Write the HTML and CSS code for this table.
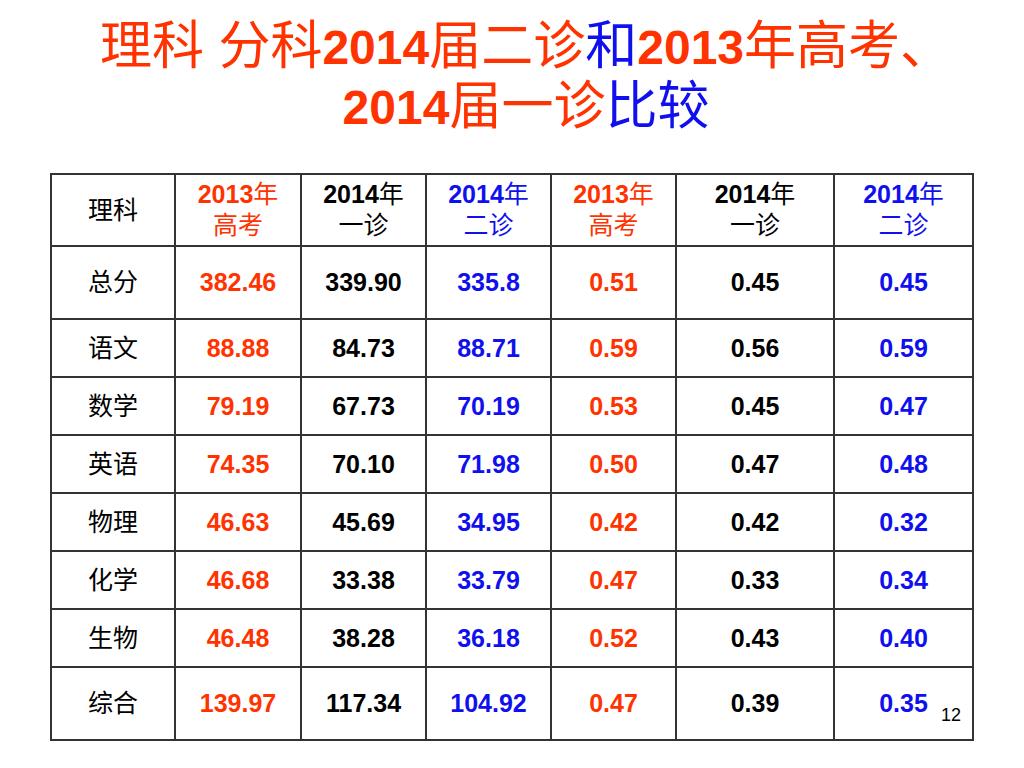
FILE: index.html
```html
<!DOCTYPE html>
<html lang="zh-CN">
<head>
<meta charset="utf-8">
<title>理科 分科比较</title>
<link rel="stylesheet" href="styles.css">
</head>
<body>
<div class="slide">
  <h1 class="title">
    <span class="line">理科 分科<b>2014</b>届二诊<span class="blue">和</span><b>2013</b>年高考、</span>
    <span class="line"><b>2014</b>届一诊<span class="blue">比较</span></span>
  </h1>
  <table class="grid">
    <colgroup>
      <col class="c1"><col class="c2"><col class="c3"><col class="c4"><col class="c5"><col class="c6"><col class="c7">
    </colgroup>
    <tr class="head">
      <td class="k">理科</td>
      <td class="r"><b>2013</b>年<br>高考</td>
      <td class="n"><b>2014</b>年<br>一诊</td>
      <td class="b"><b>2014</b>年<br>二诊</td>
      <td class="r"><b>2013</b>年<br>高考</td>
      <td class="n"><b>2014</b>年<br>一诊</td>
      <td class="b"><b>2014</b>年<br>二诊</td>
    </tr>
    <tr class="tall">
      <td class="k">总分</td><td class="r v">382.46</td><td class="n v">339.90</td><td class="b v">335.8</td><td class="r v">0.51</td><td class="n v">0.45</td><td class="b v">0.45</td>
    </tr>
    <tr class="row">
      <td class="k">语文</td><td class="r v">88.88</td><td class="n v">84.73</td><td class="b v">88.71</td><td class="r v">0.59</td><td class="n v">0.56</td><td class="b v">0.59</td>
    </tr>
    <tr class="row">
      <td class="k">数学</td><td class="r v">79.19</td><td class="n v">67.73</td><td class="b v">70.19</td><td class="r v">0.53</td><td class="n v">0.45</td><td class="b v">0.47</td>
    </tr>
    <tr class="row">
      <td class="k">英语</td><td class="r v">74.35</td><td class="n v">70.10</td><td class="b v">71.98</td><td class="r v">0.50</td><td class="n v">0.47</td><td class="b v">0.48</td>
    </tr>
    <tr class="row">
      <td class="k">物理</td><td class="r v">46.63</td><td class="n v">45.69</td><td class="b v">34.95</td><td class="r v">0.42</td><td class="n v">0.42</td><td class="b v">0.32</td>
    </tr>
    <tr class="row">
      <td class="k">化学</td><td class="r v">46.68</td><td class="n v">33.38</td><td class="b v">33.79</td><td class="r v">0.47</td><td class="n v">0.33</td><td class="b v">0.34</td>
    </tr>
    <tr class="row">
      <td class="k">生物</td><td class="r v">46.48</td><td class="n v">38.28</td><td class="b v">36.18</td><td class="r v">0.52</td><td class="n v">0.43</td><td class="b v">0.40</td>
    </tr>
    <tr class="tall">
      <td class="k">综合</td><td class="r v">139.97</td><td class="n v">117.34</td><td class="b v">104.92</td><td class="r v">0.47</td><td class="n v">0.39</td><td class="b v">0.35</td>
    </tr>
  </table>
  <div class="pageno">12</div>
</div>
</body>
</html>
```

FILE: styles.css
```css
html, body {
  margin: 0;
  padding: 0;
  background: #ffffff;
}

.slide {
  position: relative;
  width: 1024px;
  height: 768px;
  font-family: "Liberation Sans", "Noto Sans CJK SC", sans-serif;
}

.title {
  margin: 0;
  padding: 16px 0 0 28px;
  height: 173px;
  box-sizing: border-box;
  display: flex;
  flex-direction: column;
  align-items: center;
  font-family: "Liberation Sans", "Noto Sans CJK SC", sans-serif;
  font-weight: normal;
  font-size: 52px;
  line-height: 60px;
  color: #ff3300;
}

.title .line {
  display: block;
  white-space: nowrap;
  height: 60px;
}

.title b {
  font-weight: bold;
  font-size: 48px;
}

.blue {
  color: #1010ee;
}

.grid {
  margin-left: 50px;
  border-collapse: collapse;
  table-layout: fixed;
  width: 923px;
}

.grid td {
  border: 2px solid #333333;
  padding: 0;
  text-align: center;
  vertical-align: middle;
  font-size: 25px;
  line-height: 31px;
  font-weight: normal;
}

.grid td b {
  font-weight: bold;
}

.grid td.v {
  font-weight: bold;
  font-size: 25px;
}

.c1 { width: 124px; }
.c2 { width: 126px; }
.c3 { width: 125px; }
.c4 { width: 125px; }
.c5 { width: 125px; }
.c6 { width: 158px; }
.c7 { width: 139px; }

.head { height: 72px; }
.tall { height: 73px; }
.row { height: 58px; }

.k { color: #000000; }
.r { color: #ff3300; }
.n { color: #000000; }
.b { color: #1010ee; }

.pageno {
  position: absolute;
  left: 941px;
  top: 705px;
  font-size: 18px;
  line-height: 20px;
  color: #000000;
}
```
